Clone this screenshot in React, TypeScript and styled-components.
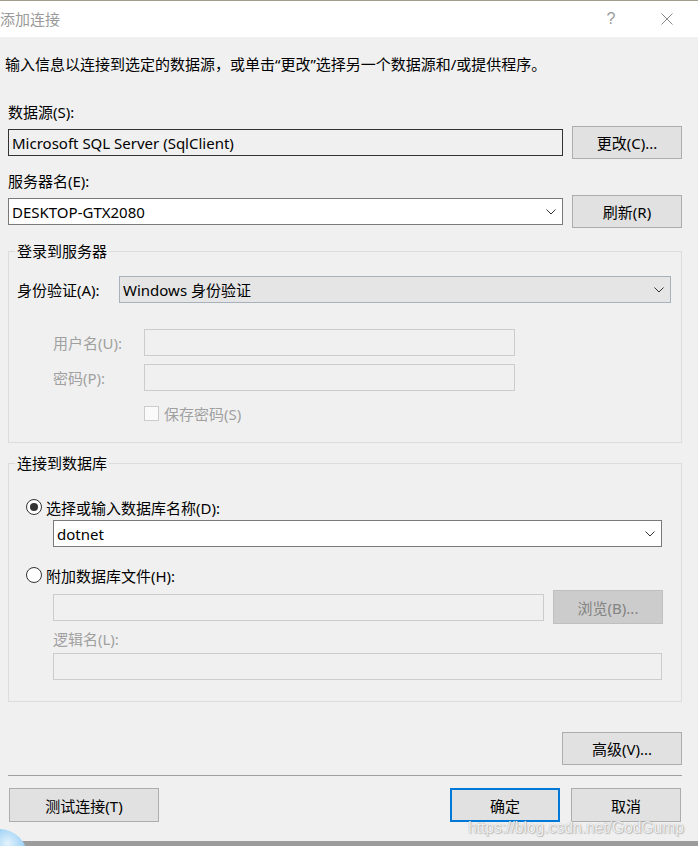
import React from 'react';
import styled, { createGlobalStyle } from 'styled-components';

const GlobalStyle = createGlobalStyle`
  html, body {
    margin: 0;
    padding: 0;
  }
  body {
    background: #9c9c9c;
    font-family: "Noto Sans", "Noto Sans CJK SC", sans-serif;
    font-size: 15px;
    color: #000;
  }
`;

const Chevron: React.FC = () => (
  <svg width="10" height="6" viewBox="0 0 10 6">
    <path d="M0.5 0.5 L5 5 L9.5 0.5" fill="none" stroke="#333" strokeWidth="1" />
  </svg>
);

const CloseIcon: React.FC = () => (
  <svg width="12" height="12" viewBox="0 0 12 12">
    <path d="M0.5 0.5 L11.5 11.5 M11.5 0.5 L0.5 11.5" fill="none" stroke="#8a8a8a" strokeWidth="1" />
  </svg>
);

const App: React.FC = () => {
  return (
    <>
      <GlobalStyle />
      <Window>
        <TitleBar>
          <Title>添加连接</Title>
          <TitleButtons>
            <HelpMark>?</HelpMark>
            <CloseButton>
              <CloseIcon />
            </CloseButton>
          </TitleButtons>
        </TitleBar>

        <Body>
          <Description>输入信息以连接到选定的数据源，或单击“更改”选择另一个数据源和/或提供程序。</Description>

          <FieldLabel $marginTop={28}>数据源(S):</FieldLabel>
          <FieldRow>
            <TextBox $readOnly>Microsoft SQL Server (SqlClient)</TextBox>
            <Button>更改(C)...</Button>
          </FieldRow>

          <FieldLabel $marginTop={12}>服务器名(E):</FieldLabel>
          <FieldRow>
            <ComboBox>
              <span>DESKTOP-GTX2080</span>
              <Chevron />
            </ComboBox>
            <Button>刷新(R)</Button>
          </FieldRow>

          <GroupBox $marginTop={13}>
            <Legend>登录到服务器</Legend>
            <GroupContent $padLeft={8} $padRight={10}>
              <AuthRow>
                <AuthLabel>身份验证(A):</AuthLabel>
                <DropDown>
                  <span>Windows 身份验证</span>
                  <Chevron />
                </DropDown>
              </AuthRow>
              <CredentialRow $marginTop={26}>
                <CredentialLabel>用户名(U):</CredentialLabel>
                <DisabledInput $width={371} />
              </CredentialRow>
              <CredentialRow $marginTop={8}>
                <CredentialLabel>密码(P):</CredentialLabel>
                <DisabledInput $width={371} />
              </CredentialRow>
              <CheckRow>
                <CheckBox />
                <DisabledText>保存密码(S)</DisabledText>
              </CheckRow>
            </GroupContent>
          </GroupBox>

          <GroupBox $marginTop={10}>
            <Legend>连接到数据库</Legend>
            <GroupContent $padLeft={17} $padRight={19}>
              <RadioRow $marginTop={24}>
                <Radio $checked />
                <span>选择或输入数据库名称(D):</span>
              </RadioRow>
              <Indented $marginTop={3}>
                <ComboBox>
                  <span>dotnet</span>
                  <Chevron />
                </ComboBox>
              </Indented>
              <RadioRow $marginTop={18}>
                <Radio />
                <span>附加数据库文件(H):</span>
              </RadioRow>
              <FileRow>
                <DisabledInput />
                <Button disabled $height={34}>浏览(B)...</Button>
              </FileRow>
              <Indented $marginTop={5}>
                <DisabledText>逻辑名(L):</DisabledText>
              </Indented>
              <Indented $marginTop={4}>
                <DisabledInput />
              </Indented>
            </GroupContent>
          </GroupBox>

          <AdvancedRow>
            <Button $width={120}>高级(V)...</Button>
          </AdvancedRow>

          <Separator />

          <ActionRow>
            <Button $width={150} $height={34}>测试连接(T)</Button>
            <ActionGroup>
              <Button $width={110} $height={34} $primary>确定</Button>
              <Button $width={110} $height={34}>取消</Button>
            </ActionGroup>
          </ActionRow>
        </Body>

        <Watermark>https://blog.csdn.net/GodGump</Watermark>
      </Window>
      <DesktopBlob />
    </>
  );
};

const Window = styled.div`
  position: relative;
  width: 698px;
  height: 841px;
  background: #f0f0f0;
  display: flex;
  flex-direction: column;
  overflow: hidden;
`;

const TitleBar = styled.div`
  height: 36px;
  border-top: 1px solid #a39b8c;
  background: #fff;
  display: flex;
  align-items: center;
  justify-content: space-between;
`;

const Title = styled.div`
  margin-left: 0;
  font-size: 15px;
  line-height: 20px;
  color: #9a9a9a;
`;

const TitleButtons = styled.div`
  display: flex;
  align-items: center;
  height: 100%;
`;

const HelpMark = styled.div`
  width: 58px;
  text-align: center;
  font-size: 16px;
  color: #9a9a9a;
  font-family: "Liberation Sans", sans-serif;
`;

const CloseButton = styled.div`
  width: 54px;
  display: flex;
  justify-content: center;
  align-items: center;
  margin-right: 4px;
`;

const Body = styled.div`
  display: flex;
  flex-direction: column;
  padding: 17px 16px 0 8px;
`;

const Description = styled.div`
  margin-left: -3px;
  line-height: 20px;
  white-space: nowrap;
`;

const FieldLabel = styled.div<{ $marginTop: number }>`
  margin-top: ${p => p.$marginTop}px;
  line-height: 20px;
`;

const FieldRow = styled.div`
  margin-top: 4px;
  height: 33px;
  display: grid;
  grid-template-columns: 1fr 110px;
  column-gap: 9px;
  align-items: center;
`;

const TextBox = styled.div<{ $readOnly?: boolean }>`
  height: 27px;
  box-sizing: border-box;
  border: 1px solid ${p => (p.$readOnly ? '#333' : '#7a7a7a')};
  background: ${p => (p.$readOnly ? '#f0f0f0' : '#fff')};
  display: flex;
  align-items: center;
  padding: 0 3px;
  white-space: nowrap;
`;

const ComboBox = styled.div`
  height: 27px;
  box-sizing: border-box;
  border: 1px solid #7a7a7a;
  background: #fff;
  display: flex;
  align-items: center;
  justify-content: space-between;
  padding: 0 6px 0 3px;
  white-space: nowrap;
`;

const Button = styled.button<{ $width?: number; $height?: number; $primary?: boolean }>`
  width: ${p => (p.$width ? `${p.$width}px` : '100%')};
  height: ${p => p.$height ?? 33}px;
  box-sizing: border-box;
  margin: 0;
  padding: 0;
  font-family: inherit;
  font-size: 15px;
  color: #000;
  background: #e1e1e1;
  border: ${p => (p.$primary ? '2px solid #0078d7' : '1px solid #adadad')};
  border-radius: 0;

  &:disabled {
    background: #cccccc;
    border-color: #bfbfbf;
    color: #838383;
  }
`;

const GroupBox = styled.fieldset<{ $marginTop: number }>`
  margin: ${p => p.$marginTop}px 0 0 0;
  padding: 0;
  min-width: 0;
  border: 1px solid #dcdcdc;
`;

const Legend = styled.legend`
  margin-left: 6px;
  padding: 0 2px;
  line-height: 20px;
  font-size: 15px;
`;

const GroupContent = styled.div<{ $padLeft: number; $padRight: number }>`
  display: flex;
  flex-direction: column;
  padding: 0 ${p => p.$padRight}px 21px ${p => p.$padLeft}px;
`;

const AuthRow = styled.div`
  margin-top: 15px;
  display: flex;
  align-items: center;
  height: 27px;
`;

const AuthLabel = styled.div`
  width: 102px;
  flex-shrink: 0;
`;

const DropDown = styled.div`
  flex: 1;
  height: 27px;
  box-sizing: border-box;
  border: 1px solid #a7b1bb;
  background: #e5e5e5;
  display: flex;
  align-items: center;
  justify-content: space-between;
  padding: 0 6px 0 3px;
`;

const CredentialRow = styled.div<{ $marginTop: number }>`
  margin-top: ${p => p.$marginTop}px;
  padding-left: 36px;
  display: flex;
  align-items: center;
`;

const CredentialLabel = styled.div`
  width: 91px;
  color: #a0a0a0;
`;

const DisabledInput = styled.div<{ $width?: number }>`
  width: ${p => (p.$width ? `${p.$width}px` : 'auto')};
  height: 27px;
  box-sizing: border-box;
  border: 1px solid #cccccc;
  background: #f0f0f0;
`;

const DisabledText = styled.span`
  color: #a0a0a0;
  line-height: 20px;
`;

const CheckRow = styled.div`
  margin-top: 15px;
  padding-left: 127px;
  height: 15px;
  display: flex;
  align-items: center;
  gap: 5px;
`;

const CheckBox = styled.span`
  width: 15px;
  height: 15px;
  box-sizing: border-box;
  border: 1px solid #cccccc;
  background: #fafafa;
`;

const RadioRow = styled.div<{ $marginTop: number }>`
  margin-top: ${p => p.$marginTop}px;
  height: 20px;
  display: flex;
  align-items: center;
  gap: 4px;
`;

const Radio = styled.span<{ $checked?: boolean }>`
  width: 16px;
  height: 16px;
  box-sizing: border-box;
  border: 1px solid #333;
  border-radius: 50%;
  background: #fff;
  display: flex;
  align-items: center;
  justify-content: center;

  &::after {
    content: '';
    width: 8px;
    height: 8px;
    border-radius: 50%;
    background: ${p => (p.$checked ? '#333' : 'transparent')};
  }
`;

const Indented = styled.div<{ $marginTop: number }>`
  margin-top: ${p => p.$marginTop}px;
  margin-left: 27px;
  display: block;
`;

const FileRow = styled.div`
  margin-top: 5px;
  margin-left: 27px;
  margin-right: -1px;
  height: 34px;
  display: grid;
  grid-template-columns: 1fr 110px;
  column-gap: 9px;
  align-items: center;
`;

const AdvancedRow = styled.div`
  margin-top: 30px;
  display: flex;
  justify-content: flex-end;
`;

const Separator = styled.div`
  margin-top: 10px;
  height: 1px;
  background: #a0a0a0;
`;

const ActionRow = styled.div`
  margin-top: 12px;
  display: flex;
  justify-content: space-between;
  align-items: center;
  padding-left: 1px;
`;

const ActionGroup = styled.div`
  display: flex;
  gap: 11px;
  margin-right: 1px;
`;

const Watermark = styled.div`
  position: absolute;
  left: 468px;
  top: 817px;
  font-family: "Liberation Sans", Arial, sans-serif;
  font-size: 15.6px;
  line-height: 22px;
  color: rgba(255, 255, 255, 0.85);
  text-shadow: 0 0 1px rgba(120, 120, 120, 0.7), 1px 1px 1px rgba(150, 150, 150, 0.5);
  pointer-events: none;
  white-space: nowrap;
`;

const DesktopBlob = styled.div`
  position: absolute;
  left: -30px;
  top: 829px;
  width: 58px;
  height: 58px;
  border-radius: 50%;
  background: radial-gradient(circle at 65% 25%, #e4f3fd 0%, #8fcaf3 35%, #3d97e2 70%, #1b6fc8 100%);
`;

export default App;
